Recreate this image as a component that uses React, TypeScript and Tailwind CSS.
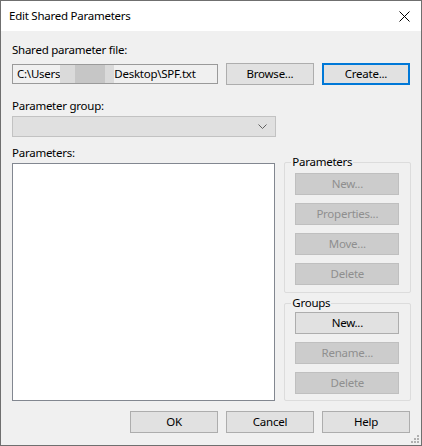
export default function App() {
    const font = "font-['Segoe_UI','Noto_Sans','Open_Sans',sans-serif]";

    // plain Win10 style button
    const btn = "h-[22px] w-[88px] flex items-center justify-center bg-[#e1e1e1] border border-[#adadad] text-black";
    const btnOff = "h-[22px] w-[104px] flex items-center justify-center bg-[#cccccc] border border-[#bfbfbf] text-[#8f8f8f]";

    return (
        <div className={`w-[422px] h-[446px] flex flex-col bg-[#f0f0f0] border border-[#6f6f6f] text-[11.5px] tracking-[-0.25px] leading-[16px] text-black ${font}`}>
            {/* Title bar */}
            <div className="h-[30px] bg-white flex items-center justify-between pl-[8px] pr-[11px] shrink-0">
                <span className="text-[11.5px]">Edit Shared Parameters</span>
                <svg width="11" height="11" viewBox="0 0 11 11" className="mt-[1px]">
                    <path d="M0.5 0.5 L10.5 10.5 M10.5 0.5 L0.5 10.5" stroke="#000" strokeWidth="1" />
                </svg>
            </div>

            {/* Body */}
            <div className="relative flex-1 flex flex-col pl-[11px] pr-[10px] pt-[11px]">
                <div>Shared parameter file:</div>
                <div className="mt-[5px] flex items-center h-[22px] gap-[8px]">
                    <div className="h-[20px] w-[206px] flex items-center bg-[#f0f0f0] border border-[#9a9a9a] pl-[4px] overflow-hidden whitespace-nowrap">
                        <span>C:\Users</span>
                        <span className="inline-block h-[18px] w-[15px] bg-[#dadada]" />
                        <span className="inline-block h-[18px] w-[30px] bg-[#c6c6c6]" />
                        <span className="inline-block h-[18px] w-[9px] bg-[#dadada]" />
                        <span>Desktop\SPF.txt</span>
                    </div>
                    <div className={btn}>Browse...</div>
                    <div className="h-[22px] w-[88px] flex items-center justify-center bg-[#e1e1e1] border-2 border-[#0078d7]">Create...</div>
                </div>

                <div className="mt-[13px]">Parameter group:</div>
                <div className="mt-[2px] h-[21px] w-[264px] flex items-center justify-end pr-[8px] bg-[#e0e0e0] border border-[#c2c2c2]">
                    <svg width="9" height="5" viewBox="0 0 9 5">
                        <path d="M0.5 0.5 L4.5 4.5 L8.5 0.5" fill="none" stroke="#606060" strokeWidth="1" />
                    </svg>
                </div>

                <div className="mt-[8px] flex gap-[9px]">
                    {/* Left: parameter list */}
                    <div className="flex flex-col w-[264px]">
                        <div>Parameters:</div>
                        <div className="mt-[2px] h-[238px] bg-white border border-[#828790]" />
                    </div>

                    {/* Right: group boxes */}
                    <div className="flex flex-col pt-[17px] w-[127px]">
                        <div className="relative h-[131px] border border-[#dcdcdc] rounded-[2px] pt-[10px] pl-[10px] flex flex-col gap-[8px]">
                            <span className="absolute -top-[9px] left-[6px] px-[1px] bg-[#f0f0f0]">Parameters</span>
                            <div className={btnOff}>New...</div>
                            <div className={btnOff}>Properties...</div>
                            <div className={btnOff}>Move...</div>
                            <div className={btnOff}>Delete</div>
                        </div>
                        <div className="relative mt-[10px] h-[98px] border border-[#dcdcdc] rounded-[2px] pt-[8px] pl-[10px] flex flex-col gap-[8px]">
                            <span className="absolute -top-[9px] left-[6px] px-[1px] bg-[#f0f0f0]">Groups</span>
                            <div className="h-[22px] w-[104px] flex items-center justify-center bg-[#e1e1e1] border border-[#adadad]">New...</div>
                            <div className={btnOff}>Rename...</div>
                            <div className={btnOff}>Delete</div>
                        </div>
                    </div>
                </div>

                <div className="mt-[10px] flex justify-end gap-[8px] pr-[1px]">
                    <div className={btn}>OK</div>
                    <div className={btn}>Cancel</div>
                    <div className={btn}>Help</div>
                </div>

                {/* resize grip */}
                <svg width="8" height="8" viewBox="0 0 8 8" className="absolute right-[2px] bottom-[2px]">
                    <rect x="6" y="0" width="2" height="2" fill="#b0b0b0" />
                    <rect x="3" y="3" width="2" height="2" fill="#b0b0b0" />
                    <rect x="6" y="3" width="2" height="2" fill="#b0b0b0" />
                    <rect x="0" y="6" width="2" height="2" fill="#b0b0b0" />
                    <rect x="3" y="6" width="2" height="2" fill="#b0b0b0" />
                    <rect x="6" y="6" width="2" height="2" fill="#b0b0b0" />
                </svg>
            </div>
        </div>
    );
}
